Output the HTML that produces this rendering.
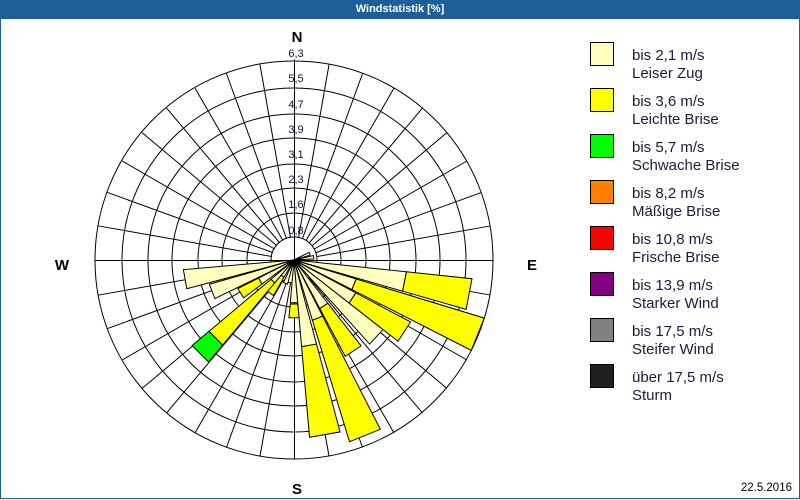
<!DOCTYPE html>
<html><head><meta charset="utf-8"><style>
html,body{margin:0;padding:0;background:#fff}
#w{position:relative;width:798px;height:498px;border:1px solid #1f5f99;border-top:none;background:#fff;overflow:hidden}
#t{position:absolute;left:0;top:0;width:798px;height:19px;background:#1f5f99;color:#fff;font:bold 11px "Liberation Sans",sans-serif;text-align:center;line-height:19px}
svg{position:absolute;left:0;top:0}
.lg{position:absolute;left:589px;font:15px "Liberation Sans",sans-serif;color:#1a1a40}
.lg i{position:absolute;left:0;top:0;width:22px;height:22px;border:1px solid #000}
.lg span{position:absolute;left:42px;top:5px;white-space:nowrap;line-height:18px}
#d{position:absolute;right:7px;top:482px;font:11.5px "Liberation Sans",sans-serif;color:#000}
</style></head><body><div id="w">
<div id="t">Windstatistik [%]</div>
<svg width="798" height="498" viewBox="0 0 798 498">
<g fill="none" stroke="#000" stroke-width="1">
<circle cx="293" cy="260" r="23"/><circle cx="293" cy="260" r="47"/><circle cx="293" cy="260" r="72"/><circle cx="293" cy="260" r="96"/><circle cx="293" cy="260" r="122"/><circle cx="293" cy="260" r="146"/><circle cx="293" cy="260" r="172"/><circle cx="293" cy="260" r="199"/>
</g>
<g stroke="#000" stroke-width="1" transform="translate(293.5,260.5)">
<line x1="0" y1="-23" x2="0" y2="-199" transform="rotate(10)"/><line x1="0" y1="-23" x2="0" y2="-199" transform="rotate(20)"/><line x1="0" y1="-23" x2="0" y2="-199" transform="rotate(30)"/><line x1="0" y1="-23" x2="0" y2="-199" transform="rotate(40)"/><line x1="0" y1="-23" x2="0" y2="-199" transform="rotate(50)"/><line x1="0" y1="-23" x2="0" y2="-199" transform="rotate(60)"/><line x1="0" y1="-23" x2="0" y2="-199" transform="rotate(70)"/><line x1="0" y1="-23" x2="0" y2="-199" transform="rotate(80)"/>
<line x1="0" y1="-23" x2="0" y2="-199" transform="rotate(100)"/><line x1="0" y1="-23" x2="0" y2="-199" transform="rotate(110)"/><line x1="0" y1="-23" x2="0" y2="-199" transform="rotate(120)"/><line x1="0" y1="-23" x2="0" y2="-199" transform="rotate(130)"/><line x1="0" y1="-23" x2="0" y2="-199" transform="rotate(140)"/><line x1="0" y1="-23" x2="0" y2="-199" transform="rotate(150)"/><line x1="0" y1="-23" x2="0" y2="-199" transform="rotate(160)"/><line x1="0" y1="-23" x2="0" y2="-199" transform="rotate(170)"/>
<line x1="0" y1="-23" x2="0" y2="-199" transform="rotate(190)"/><line x1="0" y1="-23" x2="0" y2="-199" transform="rotate(200)"/><line x1="0" y1="-23" x2="0" y2="-199" transform="rotate(210)"/><line x1="0" y1="-23" x2="0" y2="-199" transform="rotate(220)"/><line x1="0" y1="-23" x2="0" y2="-199" transform="rotate(230)"/><line x1="0" y1="-23" x2="0" y2="-199" transform="rotate(240)"/><line x1="0" y1="-23" x2="0" y2="-199" transform="rotate(250)"/><line x1="0" y1="-23" x2="0" y2="-199" transform="rotate(260)"/>
<line x1="0" y1="-23" x2="0" y2="-199" transform="rotate(280)"/><line x1="0" y1="-23" x2="0" y2="-199" transform="rotate(290)"/><line x1="0" y1="-23" x2="0" y2="-199" transform="rotate(300)"/><line x1="0" y1="-23" x2="0" y2="-199" transform="rotate(310)"/><line x1="0" y1="-23" x2="0" y2="-199" transform="rotate(320)"/><line x1="0" y1="-23" x2="0" y2="-199" transform="rotate(330)"/><line x1="0" y1="-23" x2="0" y2="-199" transform="rotate(340)"/><line x1="0" y1="-23" x2="0" y2="-199" transform="rotate(350)"/>
<line x1="0" y1="-201" x2="0" y2="199"/><line x1="-199" y1="0" x2="199" y2="0"/>
</g>
<g stroke="#000" stroke-width="1" stroke-linejoin="miter" transform="translate(293,260)">
<g fill="#ffffc0">
<polygon points="0,0 1.5,-16.9 -1.5,-16.9" transform="rotate(68)"/>
<polygon points="0,0 1.7,-19.9 -1.7,-19.9" transform="rotate(82)"/>
<polygon points="0,0 9.7,-110.6 -9.7,-110.6" transform="rotate(260)"/>
<polygon points="0,0 7.7,-87.7 -7.7,-87.7" transform="rotate(249)"/>
<polygon points="0,0 3.5,-39.8 -3.5,-39.8" transform="rotate(238)"/>
<polygon points="0,0 2.6,-29.9 -2.6,-29.9" transform="rotate(225)"/>
<polygon points="0,0 1.7,-19.9 -1.7,-19.9" transform="rotate(215)"/>
<polygon points="0,0 2.2,-24.9 -2.2,-24.9" transform="rotate(200)"/>
<polygon points="0,0 3.7,-42.8 -3.7,-42.8" transform="rotate(180)"/>
<polygon points="0,0 7.6,-86.7 -7.6,-86.7" transform="rotate(170)"/>
<polygon points="0,0 5.5,-62.8 -5.5,-62.8" transform="rotate(158)"/>
<polygon points="0,0 4.8,-54.8 -4.8,-54.8" transform="rotate(147)"/>
<polygon points="0,0 9.9,-112.6 -9.9,-112.6" transform="rotate(133)"/>
<polygon points="0,0 6.1,-69.7 -6.1,-69.7" transform="rotate(123)"/>
<polygon points="0,0 5.7,-64.8 -5.7,-64.8" transform="rotate(112)"/>
<polygon points="0,0 9.9,-112.6 -9.9,-112.6" transform="rotate(101)"/>
</g>
<g fill="#ffff00">
<polygon points="-3.5,-39.8 3.5,-39.8 5.5,-62.8 -5.5,-62.8" transform="rotate(238)"/>
<polygon points="-2.6,-29.9 2.6,-29.9 9.7,-110.6 -9.7,-110.6" transform="rotate(225)"/>
<polygon points="-1.7,-19.9 1.7,-19.9 3.6,-40.8 -3.6,-40.8" transform="rotate(215)"/>
<polygon points="-3.7,-44 3.7,-44 5.1,-57.8 -5.1,-57.8" transform="rotate(180)"/>
<polygon points="-7.6,-86.7 7.6,-86.7 15.5,-177.3 -15.5,-177.3" transform="rotate(170)"/>
<polygon points="-5.5,-62.8 5.5,-62.8 16.6,-189.3 -16.6,-189.3" transform="rotate(158)"/>
<polygon points="-4.8,-54.8 4.8,-54.8 9.5,-108.6 -9.5,-108.6" transform="rotate(147)"/>
<polygon points="-6.1,-69.7 6.1,-69.7 11.5,-131.5 -11.5,-131.5" transform="rotate(123)"/>
<polygon points="-5.7,-64.8 5.7,-64.8 17.4,-198.2 -17.4,-198.2" transform="rotate(112)"/>
<polygon points="-9.9,-112.6 9.9,-112.6 15.6,-178.3 -15.6,-178.3" transform="rotate(101)"/>
</g>
<polygon fill="#00ff00" points="-9.7,-110.6 9.7,-110.6 11.6,-132.5 -11.6,-132.5" transform="rotate(225)"/>
</g>
<g font-family="Liberation Sans,sans-serif" font-size="11" fill="#10103a" text-anchor="middle">
<text x="295" y="57">6,3</text><text x="295" y="82">5,5</text><text x="295" y="108">4,7</text><text x="295" y="133">3,9</text><text x="295" y="158">3,1</text><text x="295" y="183">2,3</text><text x="295" y="208">1,6</text><text x="295" y="234">0,8</text>
</g>
<g font-family="Liberation Sans,sans-serif" font-size="15" font-weight="bold" fill="#000" text-anchor="middle">
<text x="296" y="42">N</text><text x="296" y="494">S</text><text x="61" y="270">W</text><text x="531" y="270">E</text>
</g>
</svg>
<div class="lg" style="top:42px"><i style="background:#ffffc0"></i><span>bis 2,1 m/s<br>Leiser Zug</span></div>
<div class="lg" style="top:88px"><i style="background:#ffff00"></i><span>bis 3,6 m/s<br>Leichte Brise</span></div>
<div class="lg" style="top:134px"><i style="background:#00ff00"></i><span>bis 5,7 m/s<br>Schwache Brise</span></div>
<div class="lg" style="top:180px"><i style="background:#ff8000"></i><span>bis 8,2 m/s<br>Mäßige Brise</span></div>
<div class="lg" style="top:226px"><i style="background:#ff0000"></i><span>bis 10,8 m/s<br>Frische Brise</span></div>
<div class="lg" style="top:272px"><i style="background:#800080"></i><span>bis 13,9 m/s<br>Starker Wind</span></div>
<div class="lg" style="top:318px"><i style="background:#808080"></i><span>bis 17,5 m/s<br>Steifer Wind</span></div>
<div class="lg" style="top:364px"><i style="background:#202020"></i><span>über 17,5 m/s<br>Sturm</span></div>
<div id="d">22.5.2016</div>
</div></body></html>
